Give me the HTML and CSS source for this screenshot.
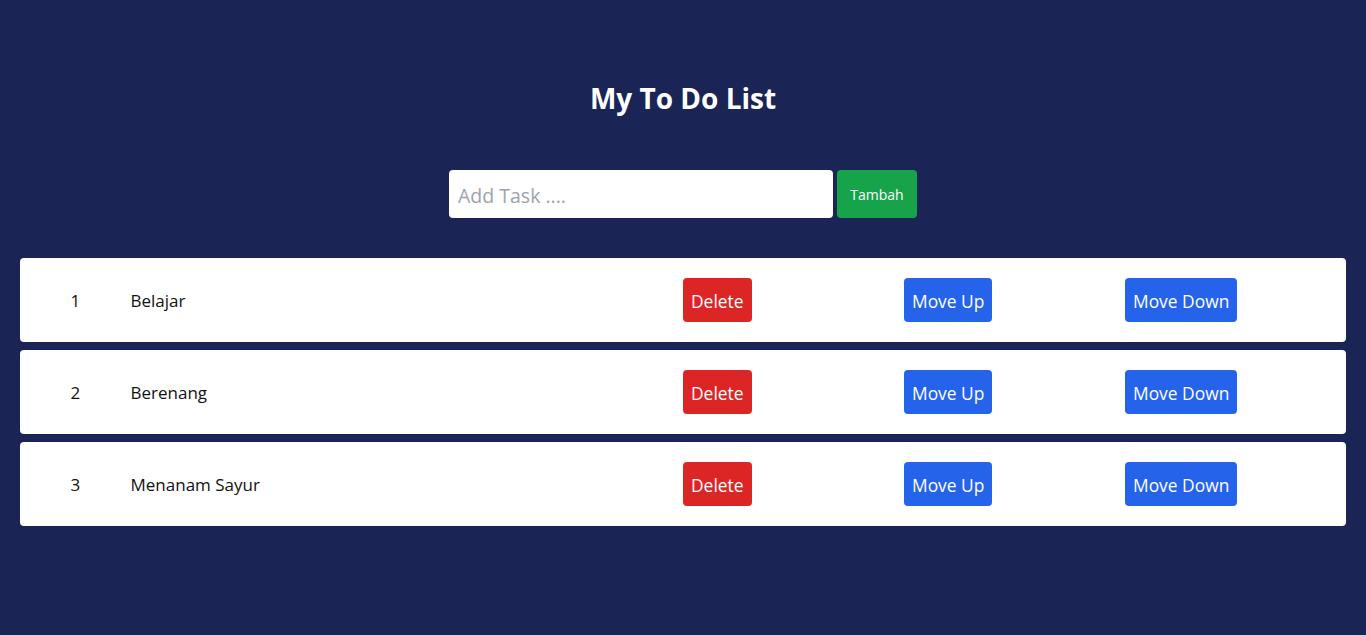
FILE: index.html
```html
<!DOCTYPE html>
<html lang="id">
<head>
<meta charset="utf-8">
<title>My To Do List</title>
<link rel="stylesheet" href="styles.css">
</head>
<body>
<main class="app">
  <h1 class="title">My To Do List</h1>
  <form class="add-form">
    <input class="add-input" type="text" placeholder="Add Task ....">
    <button class="add-btn" type="button">Tambah</button>
  </form>
  <ul class="list">
    <li class="row">
      <span class="num">1</span>
      <span class="task">Belajar</span>
      <span class="cell"><button class="btn btn-red">Delete</button></span>
      <span class="cell"><button class="btn btn-blue">Move Up</button></span>
      <span class="cell"><button class="btn btn-blue">Move Down</button></span>
    </li>
    <li class="row">
      <span class="num">2</span>
      <span class="task">Berenang</span>
      <span class="cell"><button class="btn btn-red">Delete</button></span>
      <span class="cell"><button class="btn btn-blue">Move Up</button></span>
      <span class="cell"><button class="btn btn-blue">Move Down</button></span>
    </li>
    <li class="row">
      <span class="num">3</span>
      <span class="task">Menanam Sayur</span>
      <span class="cell"><button class="btn btn-red">Delete</button></span>
      <span class="cell"><button class="btn btn-blue">Move Up</button></span>
      <span class="cell"><button class="btn btn-blue">Move Down</button></span>
    </li>
  </ul>
</main>
</body>
</html>
```
FILE: styles.css
```css
* { box-sizing: border-box; }
html, body {
  margin: 0;
  padding: 0;
  background: #1a2556;
  height: 100%;
}
body {
  font-family: "Open Sans", "Noto Sans", sans-serif;
  color: #111;
}
.app {
  padding: 80px 20px 0;
}
.title {
  margin: 0;
  text-align: center;
  color: #fff;
  font-size: 28px;
  line-height: 36px;
  font-weight: 700;
}
.add-form {
  margin-top: 54px;
  display: flex;
  justify-content: center;
  gap: 4px;
}
.add-input {
  width: 384px;
  height: 48px;
  border: none;
  border-radius: 4px;
  padding: 3px 9px 0;
  font-family: inherit;
  font-size: 19.5px;
  color: #111;
  outline: none;
}
.add-input::placeholder { color: #9ca3af; }
.add-btn {
  width: 80px;
  height: 48px;
  border: none;
  border-radius: 4px;
  background: #16a34a;
  color: #fff;
  font-family: inherit;
  font-size: 14px;
}
.list {
  list-style: none;
  margin: 40px 0 0;
  padding: 0;
  display: flex;
  flex-direction: column;
  gap: 8px;
}
.row {
  background: #fff;
  border-radius: 4px;
  padding: 20px 0;
  display: grid;
  grid-template-columns: repeat(12, 1fr);
  align-items: center;
  font-size: 17px;
}
.num {
  grid-column: span 1;
  text-align: center;
}
.task {
  grid-column: span 5;
}
.cell {
  grid-column: span 2;
}
.btn {
  border: none;
  border-radius: 4px;
  color: #fff;
  font-family: inherit;
  font-size: 17.4px;
  line-height: 28px;
  padding: 9px 8px 7px;
}
.btn-red { background: #dc2626; }
.btn-blue { background: #2563eb; }
```
